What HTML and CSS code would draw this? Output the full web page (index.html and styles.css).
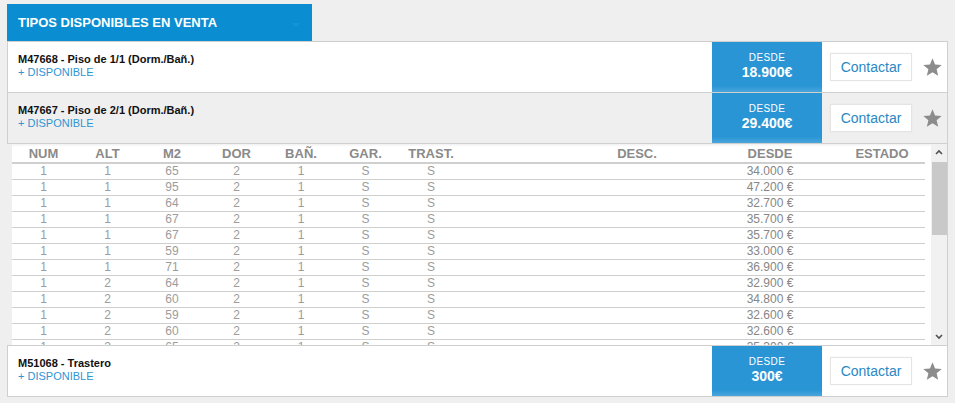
FILE: index.html
```html
<!DOCTYPE html>
<html lang="es">
<head>
    <meta charset="UTF-8">
    <title>Tipos disponibles en venta</title>
    <link rel="stylesheet" href="styles.css">
</head>
<body>
    <div class="panel">
        <div class="tab">
            <span>TIPOS DISPONIBLES EN VENTA</span>
            <span class="tab-caret"></span>
        </div>

        <div class="unit">
            <div class="unit-info">
                <div class="unit-title">M47668 - Piso de 1/1 (Dorm./Bañ.)</div>
                <a class="unit-more" href="#">+ DISPONIBLE</a>
            </div>
            <div class="price">
                <span class="price-label">DESDE</span>
                <span class="price-value">18.900€</span>
            </div>
            <button class="contact">Contactar</button>
            <svg class="star" viewBox="0 0 24 24"><polygon points="12,1.5 14.9,8.6 22.5,9.1 16.7,14 18.5,21.5 12,17.4 5.5,21.5 7.3,14 1.5,9.1 9.1,8.6"/></svg>
        </div>

        <div class="unit unit-open">
            <div class="unit-info">
                <div class="unit-title">M47667 - Piso de 2/1 (Dorm./Bañ.)</div>
                <a class="unit-more" href="#">+ DISPONIBLE</a>
            </div>
            <div class="price">
                <span class="price-label">DESDE</span>
                <span class="price-value">29.400€</span>
            </div>
            <button class="contact">Contactar</button>
            <svg class="star" viewBox="0 0 24 24"><polygon points="12,1.5 14.9,8.6 22.5,9.1 16.7,14 18.5,21.5 12,17.4 5.5,21.5 7.3,14 1.5,9.1 9.1,8.6"/></svg>
        </div>

        <div class="detail">
            <div class="detail-scroll">
                <table class="stock">
                    <colgroup>
                        <col style="width:63px"><col style="width:65px"><col style="width:64px">
                        <col style="width:65px"><col style="width:64px"><col style="width:65px">
                        <col style="width:66px"><col style="width:266px"><col style="width:80px">
                        <col style="width:115px">
                    </colgroup>
                    <thead>
                        <tr>
                            <th>NUM</th><th>ALT</th><th>M2</th><th>DOR</th><th>BAÑ.</th><th>GAR.</th><th>TRAST.</th>
                            <th class="col-desc">DESC.</th><th>DESDE</th><th class="col-state">ESTADO</th>
                        </tr>
                    </thead>
                    <tbody>
                        <tr><td>1</td><td>1</td><td>65</td><td>2</td><td>1</td><td>S</td><td>S</td><td></td><td class="cell-price">34.000 €</td><td></td></tr>
                        <tr><td>1</td><td>1</td><td>95</td><td>2</td><td>1</td><td>S</td><td>S</td><td></td><td class="cell-price">47.200 €</td><td></td></tr>
                        <tr><td>1</td><td>1</td><td>64</td><td>2</td><td>1</td><td>S</td><td>S</td><td></td><td class="cell-price">32.700 €</td><td></td></tr>
                        <tr><td>1</td><td>1</td><td>67</td><td>2</td><td>1</td><td>S</td><td>S</td><td></td><td class="cell-price">35.700 €</td><td></td></tr>
                        <tr><td>1</td><td>1</td><td>67</td><td>2</td><td>1</td><td>S</td><td>S</td><td></td><td class="cell-price">35.700 €</td><td></td></tr>
                        <tr><td>1</td><td>1</td><td>59</td><td>2</td><td>1</td><td>S</td><td>S</td><td></td><td class="cell-price">33.000 €</td><td></td></tr>
                        <tr><td>1</td><td>1</td><td>71</td><td>2</td><td>1</td><td>S</td><td>S</td><td></td><td class="cell-price">36.900 €</td><td></td></tr>
                        <tr><td>1</td><td>2</td><td>64</td><td>2</td><td>1</td><td>S</td><td>S</td><td></td><td class="cell-price">32.900 €</td><td></td></tr>
                        <tr><td>1</td><td>2</td><td>60</td><td>2</td><td>1</td><td>S</td><td>S</td><td></td><td class="cell-price">34.800 €</td><td></td></tr>
                        <tr><td>1</td><td>2</td><td>59</td><td>2</td><td>1</td><td>S</td><td>S</td><td></td><td class="cell-price">32.600 €</td><td></td></tr>
                        <tr><td>1</td><td>2</td><td>60</td><td>2</td><td>1</td><td>S</td><td>S</td><td></td><td class="cell-price">32.600 €</td><td></td></tr>
                        <tr><td>1</td><td>2</td><td>65</td><td>2</td><td>1</td><td>S</td><td>S</td><td></td><td class="cell-price">35.300 €</td><td></td></tr>
                    </tbody>
                </table>
            </div>
            <div class="scrollbar">
                <svg class="scroll-arrow" viewBox="0 0 10 10"><polyline points="2,6.5 5,3.5 8,6.5"/></svg>
                <div class="scroll-track"><div class="scroll-thumb"></div></div>
                <svg class="scroll-arrow" viewBox="0 0 10 10"><polyline points="2,3.5 5,6.5 8,3.5"/></svg>
            </div>
        </div>

        <div class="unit unit-last">
            <div class="unit-info">
                <div class="unit-title">M51068 - Trastero</div>
                <a class="unit-more" href="#">+ DISPONIBLE</a>
            </div>
            <div class="price">
                <span class="price-label">DESDE</span>
                <span class="price-value">300€</span>
            </div>
            <button class="contact">Contactar</button>
            <svg class="star" viewBox="0 0 24 24"><polygon points="12,1.5 14.9,8.6 22.5,9.1 16.7,14 18.5,21.5 12,17.4 5.5,21.5 7.3,14 1.5,9.1 9.1,8.6"/></svg>
        </div>
    </div>
</body>
</html>
```

FILE: styles.css
```css
:root {
    --page-bg: #efefef;
    --line: #cfcfcf;
    --tab-blue: #0b8ed1;
    --price-blue: #2a95d4;
    --link-blue: #2f95d3;
    --text-grey: #8a8a8a;
}

* {
    margin: 0;
    padding: 0;
    box-sizing: border-box;
}

body {
    font-family: "Liberation Sans", Arial, sans-serif;
    background: var(--page-bg);
    color: #111;
}

.panel {
    width: 948px;
    padding: 4px 0 0 7px;
}

/* Tab header */
.tab {
    width: 305px;
    height: 37px;
    background: var(--tab-blue);
    color: #fff;
    font-size: 13px;
    font-weight: 700;
    display: flex;
    align-items: center;
    justify-content: space-between;
    padding: 0 12px 0 11px;
}

.tab-caret {
    width: 0;
    height: 0;
    border-left: 4px solid transparent;
    border-right: 4px solid transparent;
    border-top: 4px solid #1995d6;
    margin-top: 5px;
}

/* Unit rows */
.unit {
    display: flex;
    align-items: center;
    height: 52px;
    background: #fff;
    border: 1px solid var(--line);
}

.unit + .unit {
    border-top: none;
    height: 51px;
}

.unit-open {
    background: var(--page-bg);
}

.unit-last {
    border-top: 1px solid var(--line);
}

.unit-info {
    flex: 1;
    padding: 0 10px;
    margin-top: -3px;
}

.unit-title {
    font-size: 11px;
    font-weight: 700;
    line-height: 14px;
}

.unit-more {
    display: block;
    font-size: 11px;
    line-height: 13px;
    color: var(--link-blue);
    text-decoration: none;
}

.price {
    align-self: stretch;
    width: 110px;
    background: linear-gradient(var(--price-blue) 88%, #4aa6dc);
    color: #fff;
    display: flex;
    flex-direction: column;
    align-items: center;
    justify-content: center;
    padding-bottom: 1px;
}

.price-label {
    font-size: 10px;
    line-height: 12px;
    letter-spacing: 0.4px;
}

.price-value {
    font-size: 14px;
    font-weight: 700;
    line-height: 17px;
}

.contact {
    width: 82px;
    height: 28px;
    margin-left: 8px;
    background: #fff;
    border: 1px solid #e4e4e4;
    box-shadow: 0 0 1px rgba(0, 0, 0, 0.08);
    color: #2a88c4;
    font-family: inherit;
    font-size: 14px;
    cursor: pointer;
}

.star {
    width: 21px;
    height: 21px;
    margin: 0 4px 0 10px;
    fill: #8c8c8c;
}

/* Detail table */
.detail {
    display: flex;
    height: 201px;
    margin-left: 5px;
    background: #fff;
    border-right: 1px solid var(--line);
    box-shadow: inset 0 3px 3px -2px rgba(0, 0, 0, 0.08);
}

.detail-scroll {
    width: 919px;
    overflow: hidden;
}

.stock {
    width: 913px;
    table-layout: fixed;
    border-collapse: separate;
    border-spacing: 0;
    font-size: 12px;
}

.stock th {
    height: 17px;
    border-bottom: 2px solid var(--line);
    color: var(--text-grey);
    font-size: 13px;
    font-weight: 700;
    text-align: center;
    line-height: 17px;
    padding-top: 1px;
}

.stock th.col-desc {
    padding-left: 80px;
}

.stock th.col-state {
    padding-left: 29px;
}

.stock td {
    height: 15px;
    line-height: 15px;
    border-bottom: 1px solid var(--line);
    color: #9c9c9c;
    text-align: center;
}

.stock td.cell-price {
    color: #868686;
}

.scrollbar {
    width: 16px;
    background: #f1f1f1;
    display: flex;
    flex-direction: column;
}

.scroll-arrow {
    width: 16px;
    height: 17px;
    padding: 3px;
    fill: none;
    stroke: #505050;
    stroke-width: 1.6;
}

.scroll-track {
    flex: 1;
    padding: 1px 0 0 1px;
}

.scroll-thumb {
    height: 73px;
    background: #c9c9c9;
}
```
